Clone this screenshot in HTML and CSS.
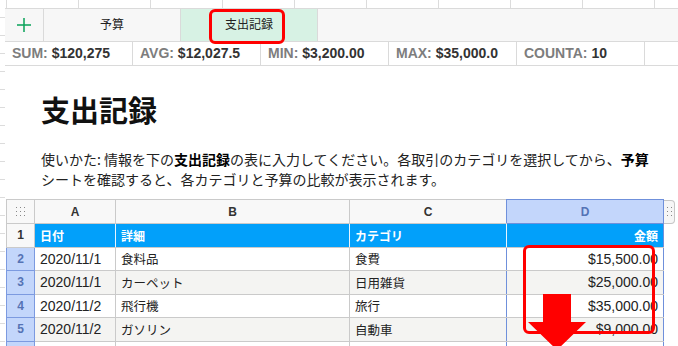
FILE: index.html
```html
<!DOCTYPE html>
<html lang="ja">
<head>
    <meta charset="UTF-8">
    <meta name="viewport" content="width=device-width, initial-scale=1.0">
    <title>支出記録</title>
    <link rel="stylesheet" href="styles.css">
</head>
<body>
    <div class="sheet">
        <div class="tabs">
            <div class="tab-add">
                <svg width="14" height="14" viewBox="0 0 14 14"><path d="M7 0v14M0 7h14" stroke="#0aa25a" stroke-width="1.5" fill="none"/></svg>
            </div>
            <div class="tab">予算</div>
            <div class="tab active">支出記録</div>
        </div>

        <div class="stats">
            <div class="stat"><span class="stat-label">SUM:</span> $120,275</div>
            <div class="stat"><span class="stat-label">AVG:</span> $12,027.5</div>
            <div class="stat"><span class="stat-label">MIN:</span> $3,200.00</div>
            <div class="stat"><span class="stat-label">MAX:</span> $35,000.0</div>
            <div class="stat"><span class="stat-label">COUNTA:</span> 10</div>
            <div class="stat"></div>
        </div>

        <div class="doc">
            <h1 class="doc-title">支出記録</h1>
            <p class="doc-text">使いかた: 情報を下の<b>支出記録</b>の表に入力してください。各取引のカテゴリを選択してから、<b>予算</b>シートを確認すると、各カテゴリと予算の比較が表示されます。</p>
        </div>

        <table class="grid">
            <colgroup>
                <col class="w-num"><col class="w-a"><col class="w-b"><col class="w-c"><col class="w-d"><col class="w-grip">
            </colgroup>
            <thead>
                <tr>
                    <th class="corner">
                        <svg width="9" height="9" viewBox="0 0 9 9" fill="#888"><rect x="0" y="0" width="1" height="1"/><rect x="4" y="0" width="1" height="1"/><rect x="8" y="0" width="1" height="1"/><rect x="0" y="4" width="1" height="1"/><rect x="4" y="4" width="1" height="1"/><rect x="8" y="4" width="1" height="1"/><rect x="0" y="8" width="1" height="1"/><rect x="4" y="8" width="1" height="1"/><rect x="8" y="8" width="1" height="1"/></svg>
                    </th>
                    <th>A</th>
                    <th>B</th>
                    <th>C</th>
                    <th class="sel-head">D</th>
                    <th class="grip">
                        <div class="grip-box">
                            <svg width="5" height="9" viewBox="0 0 5 9" fill="#888"><rect x="0" y="0" width="1" height="1"/><rect x="4" y="0" width="1" height="1"/><rect x="0" y="4" width="1" height="1"/><rect x="4" y="4" width="1" height="1"/><rect x="0" y="8" width="1" height="1"/><rect x="4" y="8" width="1" height="1"/></svg>
                        </div>
                    </th>
                </tr>
            </thead>
            <tbody>
                <tr class="hdr">
                    <td class="row-num">1</td>
                    <td>日付</td>
                    <td>詳細</td>
                    <td>カテゴリ</td>
                    <td class="sel right">金額</td>
                    <td class="grip"></td>
                </tr>
                <tr>
                    <td class="row-num on">2</td>
                    <td class="num">2020/11/1</td>
                    <td>食料品</td>
                    <td>食費</td>
                    <td class="sel num right">$15,500.00</td>
                    <td class="grip"></td>
                </tr>
                <tr class="band">
                    <td class="row-num on">3</td>
                    <td class="num">2020/11/1</td>
                    <td>カーペット</td>
                    <td>日用雑貨</td>
                    <td class="sel num right">$25,000.00</td>
                    <td class="grip"></td>
                </tr>
                <tr>
                    <td class="row-num on">4</td>
                    <td class="num">2020/11/2</td>
                    <td>飛行機</td>
                    <td>旅行</td>
                    <td class="sel num right">$35,000.00</td>
                    <td class="grip"></td>
                </tr>
                <tr class="band">
                    <td class="row-num on">5</td>
                    <td class="num">2020/11/2</td>
                    <td>ガソリン</td>
                    <td>自動車</td>
                    <td class="sel num right">$9,000.00</td>
                    <td class="grip"></td>
                </tr>
                <tr>
                    <td class="row-num on"></td>
                    <td class="num"></td>
                    <td></td>
                    <td></td>
                    <td class="sel num right"></td>
                    <td class="grip"></td>
                </tr>
            </tbody>
        </table>
    </div>

    <div class="mark mark-tab"></div>
    <div class="mark mark-range"></div>
    <svg class="mark-arrow" width="58" height="56" viewBox="0 0 58 56">
        <polygon points="15,0 43,0 43,28 58,28 29,56 0,28 15,28" fill="#ff0000"/>
    </svg>
</body>
</html>
```

FILE: styles.css
```css
* {
    margin: 0;
    padding: 0;
    box-sizing: border-box;
}

html,
body {
    height: 100%;
    overflow: hidden;
}

body {
    position: relative;
    font-family: "Liberation Sans", "Noto Sans CJK JP", sans-serif;
    color: #222;
    background-color: #fff;
    background-image:
        linear-gradient(to bottom, transparent 17px, #dcdcdc 17px),
        linear-gradient(to right, transparent 6px, #dcdcdc 6px, #dcdcdc 7px, transparent 7px);
    background-size: 100% 18px, 72px 100%;
}

.sheet {
    margin: 8px 0 0 5px;
    background: #fff;
    height: 100%;
}

/* sheet tabs */
.tabs {
    display: flex;
    height: 34px;
    background: #f7f7f7;
    border-top: 1px solid #dadada;
    border-bottom: 1px solid #dadada;
}

.tab-add {
    width: 39px;
    display: flex;
    align-items: center;
    justify-content: center;
    border-right: 1px solid #dadada;
}

.tab {
    width: 137px;
    line-height: 32px;
    text-align: center;
    font-size: 12px;
    color: #222;
    border-right: 1px solid #dadada;
}

.tab.active {
    background: #d7f2e4;
}

/* summary bar */
.stats {
    display: flex;
    height: 24px;
    border-bottom: 1px solid #dadada;
}

.stat {
    width: 128px;
    padding-left: 7px;
    line-height: 23px;
    font-size: 14px;
    font-weight: bold;
    color: #333;
    border-right: 1px solid #dadada;
    white-space: nowrap;
}

.stat:last-child {
    flex: 1;
    border-right: none;
}

.stat-label {
    color: #7d7d7d;
}

/* document block */
.doc {
    padding: 26px 0 10px 36px;
}

.doc-title {
    font-family: "Noto Sans CJK JP", sans-serif;
    font-size: 29px;
    font-weight: 700;
    line-height: 35px;
    color: #111;
    margin-bottom: 22px;
}

.doc-text {
    font-family: "Noto Sans CJK JP", sans-serif;
    font-size: 14px;
    line-height: 20px;
    width: 614px;
    color: #222;
}

.doc-text b {
    font-weight: 700;
    color: #000;
}

/* grid */
.grid {
    margin-left: 1px;
    border-collapse: collapse;
    table-layout: fixed;
    width: 669px;
}

.w-num { width: 28px; }
.w-a { width: 81px; }
.w-b { width: 234px; }
.w-c { width: 157px; }
.w-d { width: 157px; }
.w-grip { width: 12px; }

.grid th,
.grid td {
    height: 23.5px;
    padding: 0 5px;
    border: 1px solid #cacaca;
    white-space: nowrap;
    overflow: hidden;
    text-align: left;
    vertical-align: middle;
    font-size: 12.5px;
}

.grid th {
    background: #f8f8f8;
    text-align: center;
    font-size: 12px;
    font-weight: bold;
    color: #333;
}

.grid th.corner {
    padding: 0;
    line-height: 0;
}

.grid tr > :nth-child(4) {
    border-right-color: #6f90db;
}

.grid th.sel-head {
    background: #c3d6fb;
    color: #5573b5;
    border-color: #6f90db;
}

.grid td.sel {
    border-right-color: #6f90db;
}

.grid .grip {
    border: none;
    background: transparent;
    padding: 0;
}

.grip-box {
    height: 24px;
    border: 1px solid #c6c6c6;
    border-left: none;
    border-radius: 0 4px 4px 0;
    background: #f6f6f6;
    display: flex;
    align-items: center;
    justify-content: center;
}

.grid td.row-num {
    padding: 0;
    text-align: center;
    font-size: 12px;
    font-weight: bold;
    color: #444;
    background: #f8f8f8;
}

.grid td.row-num.on {
    background: #c3d6fb;
    color: #5573b5;
    border-color: #7c9ae0;
}

.grid .hdr td {
    background: #02a0fa;
    color: #fff;
    font-weight: bold;
    font-size: 12px;
    border-top-color: #cacaca;
    border-left-color: #e6f4ff;
    border-right-color: #e6f4ff;
}

.grid .hdr td.row-num {
    background: #f8f8f8;
    color: #333;
    border-color: #cacaca;
}

.grid .hdr td.sel {
    border-right-color: #6f90db;
}

.grid .hdr td.grip {
    background: transparent;
}

.grid .band td {
    background: #f4f4f2;
}

.grid .band td.row-num.on {
    background: #c3d6fb;
}

.grid .band td.grip {
    background: transparent;
}

.grid td.num {
    font-size: 14px;
}

.grid td.right {
    text-align: right;
}

/* annotations */
.mark {
    position: absolute;
    border: 3px solid #ff0000;
    border-radius: 6px;
}

.mark-tab {
    left: 209px;
    top: 9px;
    width: 76px;
    height: 35px;
}

.mark-range {
    left: 523px;
    top: 245px;
    width: 132px;
    height: 89px;
}

.mark-arrow {
    position: absolute;
    left: 528px;
    top: 294px;
}
```
